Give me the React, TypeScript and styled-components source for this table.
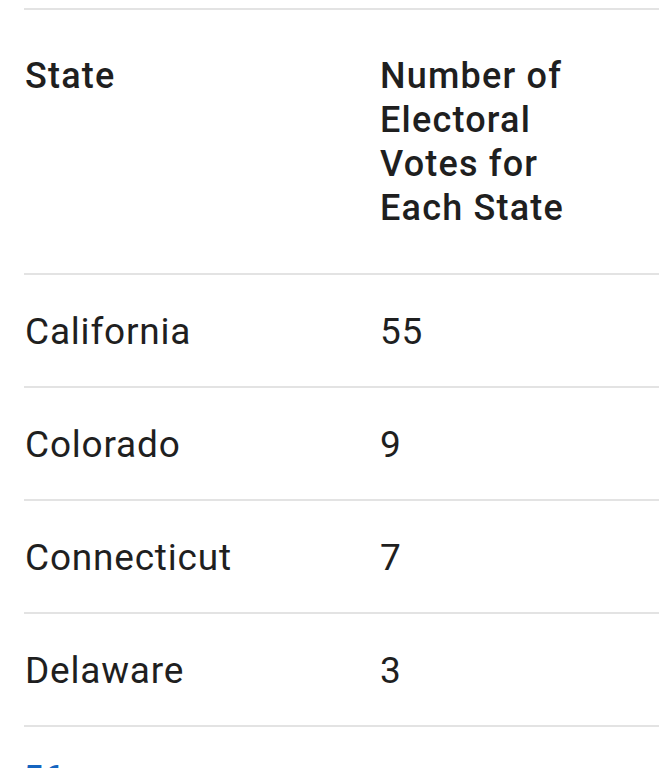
import React from "react";
import styled, { createGlobalStyle } from "styled-components";

const Global = createGlobalStyle`
  html, body { margin: 0; padding: 0; background: #ffffff; overflow: hidden; }
  body { font-family: Roboto, "Noto Sans", Arial, sans-serif; color: #1f1f1f; }
`;

const Page = styled.div`
  padding: 8px 0 0 24px;
  width: 700px;
`;

const Table = styled.table`
  width: 100%;
  border-collapse: collapse;
  border-top: 2px solid #e3e3e3;
`;

const HeadCell = styled.th<{ $w?: number }>`
  text-align: left;
  vertical-align: top;
  font-weight: 500;
  font-size: 36px;
  line-height: 44px;
  letter-spacing: 1.2px;
  padding: 44px 0 43px 1px;
  width: ${(p) => (p.$w ? `${p.$w}px` : "auto")};
  border-bottom: 2px solid #e3e3e3;
  color: #1f1f1f;
`;

const Cell = styled.td`
  font-size: 37px;
  line-height: 44px;
  letter-spacing: 0.8px;
  font-weight: 400;
  padding: 35px 0 32px 1px;
  border-bottom: 2px solid #e3e3e3;
  color: #1f1f1f;
  vertical-align: middle;
`;

const Footer = styled.div`
  margin-top: 28px;
  display: flex;
  align-items: baseline;
  gap: 12px;
  font-size: 34px;
  line-height: 44px;
`;

const Count = styled.span`
  color: #1565c0;
  font-weight: 700;
`;

const Note = styled.span`
  color: #757575;
  font-size: 26px;
`;

const rows: [string, string][] = [
  ["California", "55"],
  ["Colorado", "9"],
  ["Connecticut", "7"],
  ["Delaware", "3"],
];

export default function App() {
  return (
    <>
      <Global />
      <Page>
        <Table>
          <thead>
            <tr>
              <HeadCell $w={354}>State</HeadCell>
              <HeadCell>
                Number of
                <br />
                Electoral
                <br />
                Votes for
                <br />
                Each State
              </HeadCell>
            </tr>
          </thead>
          <tbody>
            {rows.map(([s, n]) => (
              <tr key={s}>
                <Cell>{s}</Cell>
                <Cell>{n}</Cell>
              </tr>
            ))}
          </tbody>
        </Table>
        <Footer>
          <Count>56</Count>
          <Note>people found this helpful</Note>
        </Footer>
      </Page>
    </>
  );
}
